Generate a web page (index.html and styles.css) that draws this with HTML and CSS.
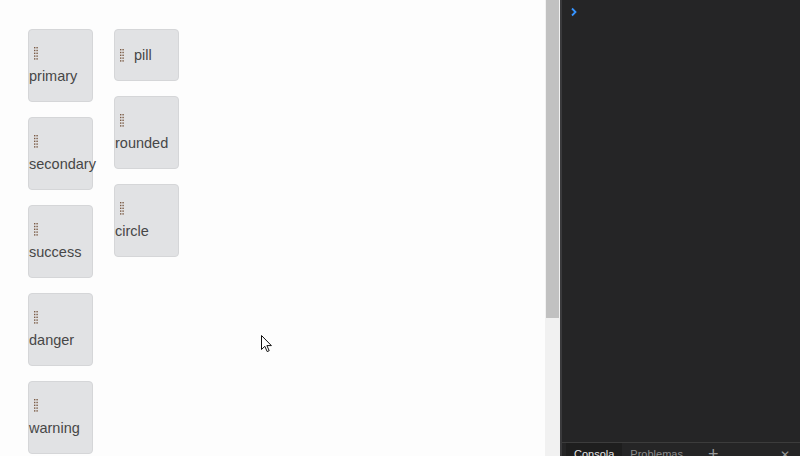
FILE: index.html
```html
<!DOCTYPE html>
<html lang="en">
<head>
    <meta charset="UTF-8">
    <title>Drag buttons</title>
    <link rel="stylesheet" href="styles.css">
</head>
<body>
    <div class="preview">
        <div class="board">
            <!-- variantes -->
            <div class="column">
                <div class="item">
                    <svg class="handle" width="4" height="13" viewBox="0 0 4 13"><use href="#dots"/></svg>
                    <span class="label">primary</span>
                </div>
                <div class="item">
                    <svg class="handle" width="4" height="13" viewBox="0 0 4 13"><use href="#dots"/></svg>
                    <span class="label">secondary</span>
                </div>
                <div class="item">
                    <svg class="handle" width="4" height="13" viewBox="0 0 4 13"><use href="#dots"/></svg>
                    <span class="label">success</span>
                </div>
                <div class="item">
                    <svg class="handle" width="4" height="13" viewBox="0 0 4 13"><use href="#dots"/></svg>
                    <span class="label">danger</span>
                </div>
                <div class="item">
                    <svg class="handle" width="4" height="13" viewBox="0 0 4 13"><use href="#dots"/></svg>
                    <span class="label">warning</span>
                </div>
            </div>

            <!-- formas -->
            <div class="column">
                <div class="item item-inline">
                    <svg class="handle" width="4" height="13" viewBox="0 0 4 13"><use href="#dots"/></svg>
                    <span class="label">pill</span>
                </div>
                <div class="item">
                    <svg class="handle" width="4" height="13" viewBox="0 0 4 13"><use href="#dots"/></svg>
                    <span class="label">rounded</span>
                </div>
                <div class="item">
                    <svg class="handle" width="4" height="13" viewBox="0 0 4 13"><use href="#dots"/></svg>
                    <span class="label">circle</span>
                </div>
            </div>
        </div>

        <svg class="cursor" width="12" height="18" viewBox="0 0 12 18">
            <path d="M0.5 0.5 L0.5 14.5 L3.8 11.3 L6.2 16.6 L8.2 15.7 L5.9 10.6 L10.4 10.6 Z" fill="#fff" stroke="#111" stroke-width="1"/>
        </svg>
    </div>

    <div class="scrollbar">
        <div class="thumb"></div>
    </div>

    <div class="console">
        <div class="console-body">
            <svg class="prompt" width="8" height="10" viewBox="0 0 8 10">
                <path d="M2 1.5 L5.5 5 L2 8.5" fill="none" stroke="#3794ff" stroke-width="1.8"/>
            </svg>
        </div>
        <div class="tabs">
            <span class="tab active">Consola</span>
            <span class="tab">Problemas</span>
            <span class="tab-add">+</span>
            <span class="tab-close">✕</span>
        </div>
    </div>

    <svg width="0" height="0" class="defs">
        <defs>
            <g id="dots" fill="#7a5a44">
                <rect x="0" y="0" width="1.4" height="1.4"/>
                <rect x="0" y="2.8" width="1.4" height="1.4"/>
                <rect x="0" y="5.6" width="1.4" height="1.4"/>
                <rect x="0" y="8.4" width="1.4" height="1.4"/>
                <rect x="0" y="11.2" width="1.4" height="1.4"/>
                <rect x="2.4" y="0" width="1.4" height="1.4"/>
                <rect x="2.4" y="2.8" width="1.4" height="1.4"/>
                <rect x="2.4" y="5.6" width="1.4" height="1.4"/>
                <rect x="2.4" y="8.4" width="1.4" height="1.4"/>
                <rect x="2.4" y="11.2" width="1.4" height="1.4"/>
            </g>
        </defs>
    </svg>
</body>
</html>
```

FILE: styles.css
```css
body {
    margin: 0;
    height: 456px;
    display: flex;
    overflow: hidden;
    font-family: "Liberation Sans", Arial, sans-serif;
    background-color: #fdfdfd;
}

.defs {
    position: absolute;
}

.preview {
    position: relative;
    width: 545px;
    padding: 29px 0 0 28px;
    box-sizing: border-box;
    background-color: #fdfdfd;
}

.board {
    display: flex;
    gap: 21px;
    align-items: flex-start;
}

.column {
    display: flex;
    flex-direction: column;
    gap: 15px;
}

.item {
    width: 65px;
    height: 73px;
    box-sizing: border-box;
    padding-top: 17px;
    background-color: #e1e2e4;
    border: 1px solid #d5d6d8;
    border-radius: 4px;
    color: #474747;
    font-size: 14.5px;
    white-space: nowrap;
}

.item .handle {
    display: block;
    margin-left: 5px;
    margin-bottom: 8px;
}

.item .label {
    display: block;
    line-height: 16px;
}

.item-inline {
    height: 52px;
    padding-top: 0;
    display: flex;
    align-items: center;
}

.item-inline .handle {
    margin: 0 10px 0 5px;
}

.cursor {
    position: absolute;
    left: 261px;
    top: 335px;
}

.scrollbar {
    width: 15px;
    background-color: #f1f1f1;
    box-sizing: border-box;
    padding: 0 1px 0 1px;
}

.scrollbar .thumb {
    height: 318px;
    background-color: #c1c1c1;
}

.console {
    flex: 1;
    display: flex;
    flex-direction: column;
    background-color: #252526;
    border-left: 2px solid #3a3a3c;
}

.console-body {
    flex: 1;
    padding: 3px 0 0 8px;
}

.tabs {
    height: 13px;
    flex-shrink: 0;
    display: flex;
    align-items: flex-start;
    border-top: 1px solid #3c3c3c;
    padding-left: 4px;
    font-size: 11px;
    color: #8b8b8b;
    overflow: hidden;
}

.tab {
    padding: 5px 5px 0 8px;
    height: 20px;
}

.tab.active {
    padding-right: 8px;
    background-color: #1e1e1e;
    color: #e6e6e6;
}

.tab-add {
    margin-left: 20px;
    padding-top: 1px;
    font-size: 18px;
    color: #9a9a9a;
}

.tab-close {
    margin-left: auto;
    margin-right: 10px;
    padding-top: 5px;
    font-size: 12px;
    color: #9a9a9a;
}
```
